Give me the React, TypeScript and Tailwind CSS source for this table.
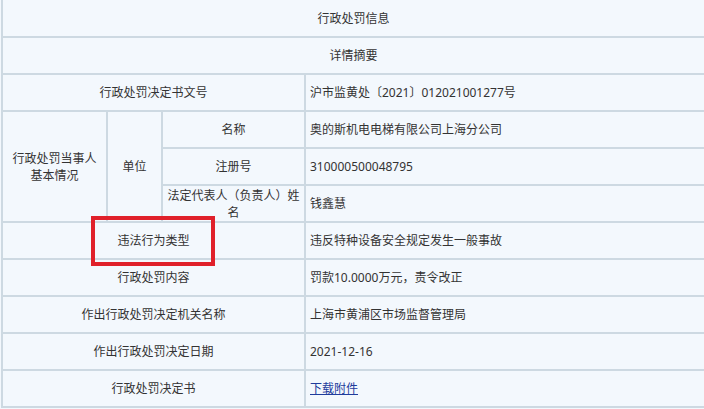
import React from "react";

const cell =
  "bg-[#f3f8fd] flex items-center justify-center text-center text-[12px] leading-[17px] text-[#333]";
const val =
  "bg-[#f3f8fd] flex items-center justify-start text-[12px] leading-[17px] text-[#333] pl-[4px]";

export default function App() {
  return (
    <div
      className="relative w-[704px] h-[409px] bg-[#f3f8fd] overflow-hidden"
      style={{ fontFamily: '"Noto Sans", "Noto Sans CJK SC", sans-serif' }}
    >
      <div className="ml-[1px] grid grid-cols-[103px_53px_141px_1fr] grid-rows-[36px_repeat(10,35px)] gap-[2px] bg-[#cdd9e2] border-l-[2px] border-b-[2px] border-[#cdd9e2]">
        <div className={`${cell} col-span-4`}>行政处罚信息</div>
        <div className={`${cell} col-span-4`}>详情摘要</div>

        <div className={`${cell} col-span-3`}>行政处罚决定书文号</div>
        <div className={val}>沪市监黄处〔2021〕012021001277号</div>

        <div className={`${cell} row-span-3 flex-col`}>
          <span>行政处罚当事人</span>
          <span>基本情况</span>
        </div>
        <div className={`${cell} row-span-3`}>单位</div>
        <div className={cell}>名称</div>
        <div className={val}>奥的斯机电电梯有限公司上海分公司</div>
        <div className={cell}>注册号</div>
        <div className={val}>310000500048795</div>
        <div className={cell}>
          <span>
            法定代表人（负责人）姓
            <br />名
          </span>
        </div>
        <div className={val}>钱鑫慧</div>

        <div className={`${cell} col-span-3`}>违法行为类型</div>
        <div className={val}>违反特种设备安全规定发生一般事故</div>

        <div className={`${cell} col-span-3`}>行政处罚内容</div>
        <div className={val}>罚款10.0000万元，责令改正</div>

        <div className={`${cell} col-span-3`}>作出行政处罚决定机关名称</div>
        <div className={val}>上海市黄浦区市场监督管理局</div>

        <div className={`${cell} col-span-3`}>作出行政处罚决定日期</div>
        <div className={val}>2021-12-16</div>

        <div className={`${cell} col-span-3`}>行政处罚决定书</div>
        <div className={val}>
          <a href="#" className="text-[#1f3c9c] underline">
            下载附件
          </a>
        </div>
      </div>

      <div className="absolute left-[91px] top-[216px] w-[124px] h-[50px] border-[4px] border-[#e0202a]" />
    </div>
  );
}
